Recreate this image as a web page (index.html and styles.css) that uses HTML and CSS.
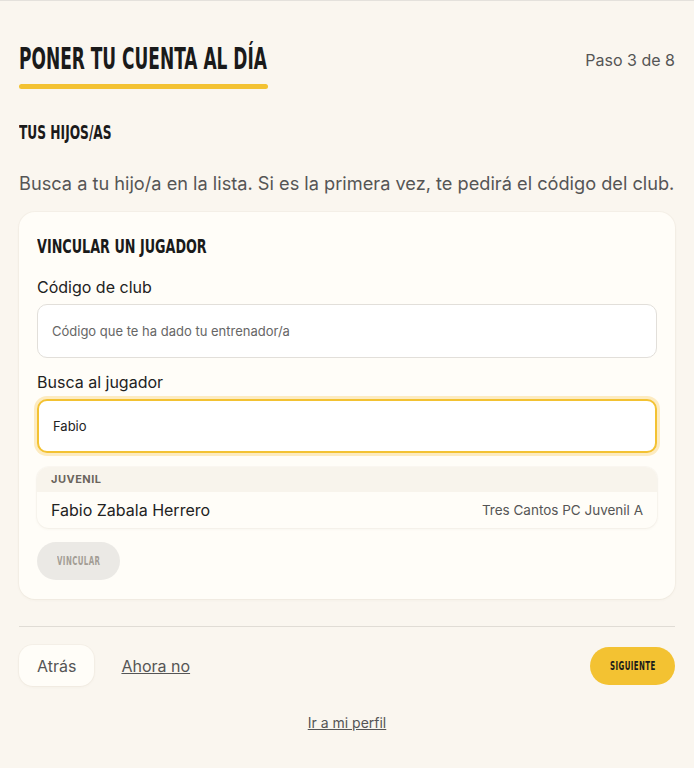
FILE: index.html
```html
<!DOCTYPE html>
<html lang="es">
<head>
    <meta charset="UTF-8">
    <meta name="viewport" content="width=device-width, initial-scale=1.0">
    <title>Poner tu cuenta al día</title>
    <link rel="stylesheet" href="styles.css">
</head>
<body>
    <div class="page">
        <header class="step-head">
            <div class="title-wrap">
                <h1><span class="cond">Poner tu cuenta al día</span></h1>
                <div class="title-bar"></div>
            </div>
            <div class="step-count">Paso 3 de 8</div>
        </header>

        <h2 class="section-title"><span class="cond">Tus hijos/as</span></h2>
        <p class="intro">Busca a tu hijo/a en la lista. Si es la primera vez, te pedirá el código del club.</p>

        <div class="card">
            <h3 class="card-title"><span class="cond">Vincular un jugador</span></h3>

            <label class="field-label" for="club-code">Código de club</label>
            <input class="field" id="club-code" type="text" placeholder="Código que te ha dado tu entrenador/a">

            <label class="field-label" for="player">Busca al jugador</label>
            <input class="field focused" id="player" type="text" value="Fabio">

            <div class="results">
                <div class="results-group">Juvenil</div>
                <div class="result-row">
                    <span class="result-name">Fabio Zabala Herrero</span>
                    <span class="result-team">Tres Cantos PC Juvenil A</span>
                </div>
            </div>

            <button class="btn-link" disabled><span class="cond">Vincular</span></button>
        </div>

        <hr class="divider">

        <div class="actions">
            <button class="btn-back">Atrás</button>
            <a class="skip" href="#">Ahora no</a>
            <button class="btn-next"><span class="cond">Siguiente</span></button>
        </div>

        <div class="profile-link"><a href="#">Ir a mi perfil</a></div>
    </div>
</body>
</html>
```

FILE: styles.css
```css
body {
    margin: 0;
    padding: 0;
    background-color: #faf6ef;
    font-family: Inter, "Noto Sans", sans-serif;
    color: #222;
    border-top: 1px solid #e4e1dc;
}
.page {
    padding: 0 19px 40px 19px;
}
/* no narrow font installed, so squeeze DejaVu Condensed */
.cond {
    display: inline-block;
    font-family: "DejaVu Sans Condensed", "DejaVu Sans", sans-serif;
    font-weight: bold;
    text-transform: uppercase;
    transform-origin: left center;
    white-space: nowrap;
}
.step-head {
    display: flex;
    justify-content: space-between;
    align-items: flex-start;
    padding-top: 40px;
}
h1 {
    margin: 0;
    font-size: 30px;
    color: #1a1a1a;
    line-height: 34px;
    white-space: nowrap;
}
h1 .cond {
    transform: scaleX(0.63);
}
.title-bar {
    width: 249px;
    height: 5px;
    margin-top: 8px;
    background: #f3c232;
    border-radius: 3px;
}
.step-count {
    margin-top: 9px;
    font-size: 16px;
    color: #555;
}
.section-title {
    margin: 31px 0 0 0;
    font-size: 20px;
    line-height: 24px;
    color: #1a1a1a;
}
.section-title .cond {
    transform: scaleX(0.68);
}
.intro {
    margin: 27px 0 17px 0;
    font-size: 18.2px;
    color: #555;
    line-height: 24px;
}
.card {
    background: #fffdf8;
    border-radius: 16px;
    padding: 22px 18px 19px 18px;
    box-shadow: 0 1px 3px rgba(120, 100, 70, 0.06), 0 0 0 1px rgba(120, 100, 70, 0.03);
}
.card-title {
    margin: 0 0 19px 0;
    font-size: 20px;
    line-height: 24px;
    color: #1a1a1a;
}
.card-title .cond {
    transform: scaleX(0.71);
}
.field-label {
    display: block;
    font-size: 16px;
    line-height: 20px;
    color: #222;
    margin-bottom: 7px;
}
.field {
    display: block;
    box-sizing: border-box;
    width: 100%;
    height: 54px;
    padding: 0 14px;
    border: 1.5px solid #e2dfda;
    border-radius: 10px;
    background: #fff;
    font-family: Inter, sans-serif;
    font-size: 13px;
    color: #222;
    margin-bottom: 14px;
    outline: none;
}
.field::placeholder {
    color: #666;
}
.field.focused {
    border: 2px solid #f3c232;
    box-shadow: 0 0 0 3px #fdebc0;
}
.results {
    border-radius: 12px;
    overflow: hidden;
    background: #fffdf8;
    box-shadow: 0 1px 3px rgba(120, 100, 70, 0.07), 0 0 0 1px rgba(120, 100, 70, 0.03);
}
.results-group {
    background: #f8f4ec;
    height: 25px;
    line-height: 25px;
    padding: 0 14px;
    font-size: 11px;
    font-weight: bold;
    letter-spacing: 0.5px;
    text-transform: uppercase;
    color: #6b645c;
}
.result-row {
    display: flex;
    justify-content: space-between;
    align-items: center;
    height: 36px;
    padding: 0 14px;
}
.result-name {
    font-size: 16px;
    color: #222;
}
.result-team {
    font-size: 13.5px;
    color: #555;
}
.btn-link {
    display: block;
    margin-top: 14px;
    width: 83px;
    height: 38px;
    padding: 0 0 0 20px;
    text-align: left;
    border: none;
    border-radius: 19px;
    background: #ebe9e5;
    color: #a39d95;
    font-size: 11.5px;
    letter-spacing: 0.6px;
}
.btn-link .cond {
    transform: scaleX(0.68);
}
.divider {
    border: none;
    border-top: 1px solid #e0dcd5;
    margin: 27px 0 18px 0;
}
.actions {
    display: flex;
    align-items: center;
}
.btn-back {
    height: 41px;
    padding: 0 18px;
    border: none;
    border-radius: 14px;
    background: #fffdf8;
    box-shadow: 0 1px 3px rgba(120, 100, 70, 0.06), 0 0 0 1px rgba(120, 100, 70, 0.03);
    font-family: Inter, sans-serif;
    font-size: 16px;
    color: #555;
}
.skip {
    margin-left: 27px;
    font-size: 16px;
    color: #555;
}
.btn-next {
    margin-left: auto;
    width: 85px;
    height: 38px;
    padding: 0 0 0 20px;
    text-align: left;
    border: none;
    border-radius: 19px;
    background: #f3c232;
    color: #1a1a1a;
    font-size: 11.5px;
    letter-spacing: 0.6px;
}
.btn-next .cond {
    transform: scaleX(0.68);
}
.profile-link {
    text-align: center;
    margin-top: 26px;
}
.profile-link a {
    font-size: 14px;
    color: #555;
}
```
